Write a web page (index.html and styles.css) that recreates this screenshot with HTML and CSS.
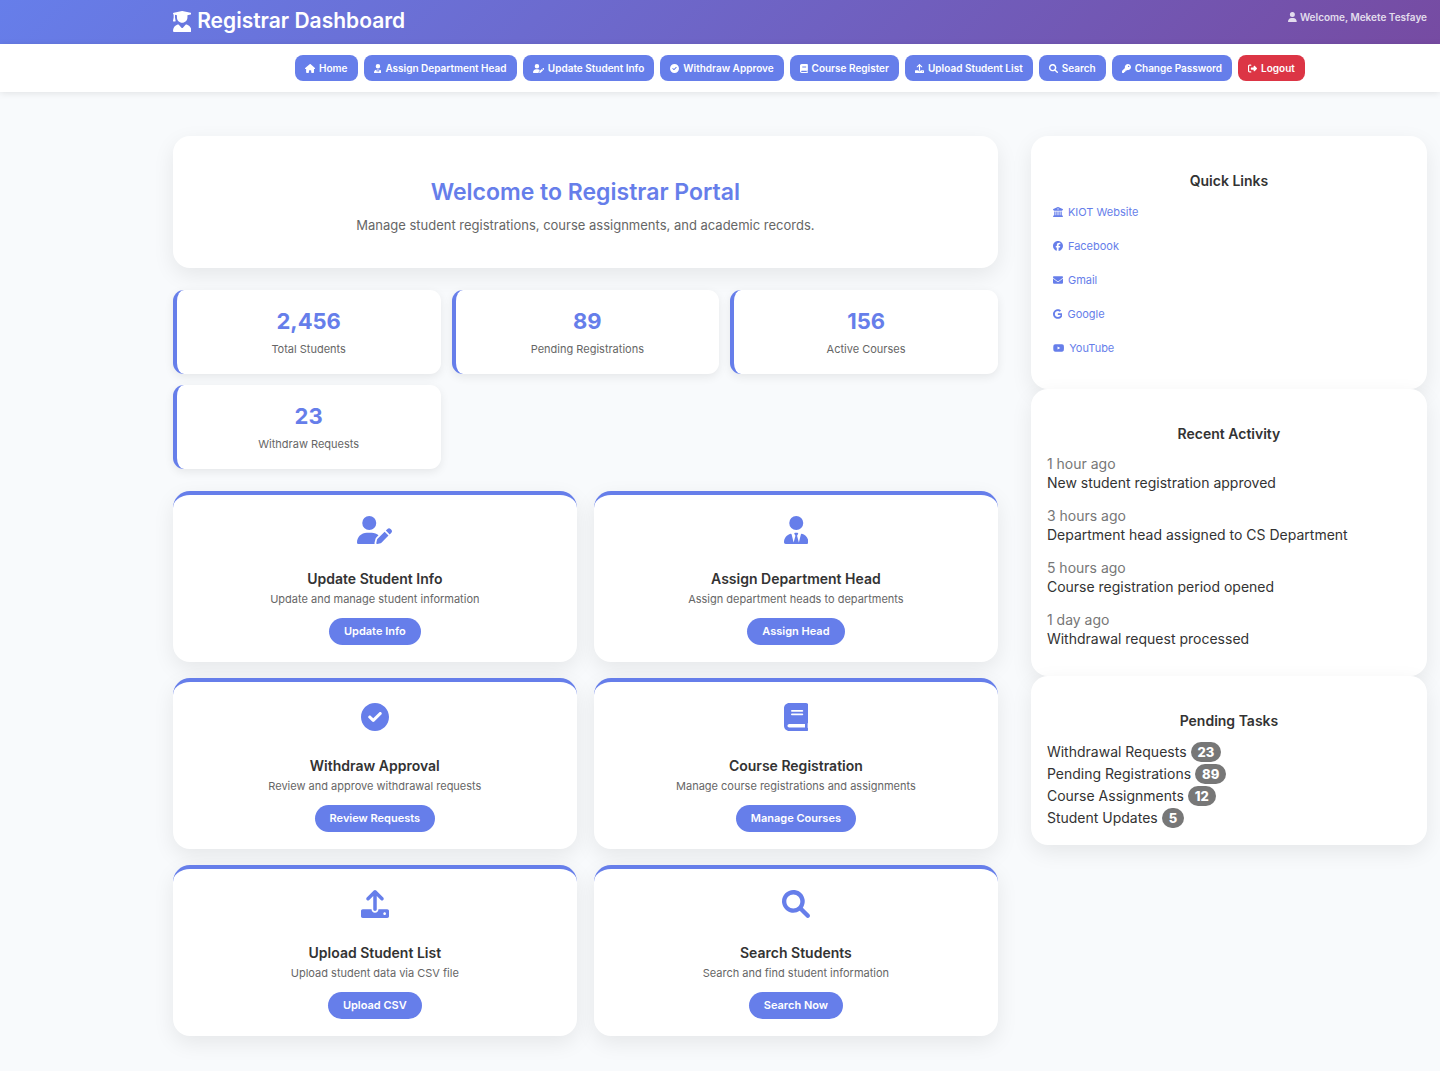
FILE: index.html
```html
<!DOCTYPE html>
<html lang="en">
<head>
<meta charset="utf-8">
<meta name="viewport" content="width=device-width, initial-scale=1">
<title>Registrar Dashboard</title>
<link rel="stylesheet" href="styles.css">
</head>
<body>
<svg class="sprite" aria-hidden="true">
<defs>
<path id="i-user" d="M224 256A128 128 0 1 0 224 0a128 128 0 1 0 0 256zm-45.7 48C79.8 304 0 383.8 0 482.3C0 498.7 13.3 512 29.7 512H418.3c16.4 0 29.7-13.3 29.7-29.7C448 383.8 368.2 304 269.7 304H178.3z"/>
<path id="i-graduate" d="M219.3 .5c3.1-.6 6.3-.6 9.4 0l200 40C439.9 42.7 448 52.6 448 64s-8.1 21.3-19.3 23.5L352 102.9V160c0 70.7-57.3 128-128 128s-128-57.3-128-128V102.9L48 93.3v65.1l15.7 78.4c.9 4.7-.3 9.6-3.3 13.3s-7.6 5.9-12.4 5.9H16c-4.8 0-9.3-2.1-12.4-5.9s-4.3-8.6-3.3-13.3L16 158.4V86.6C6.5 83.3 0 74.3 0 64C0 52.6 8.1 42.7 19.3 40.5l200-40zM111.9 327.7c10.5-3.4 21.8 .4 29.4 8.5l71 75.5c6.3 6.7 17 6.7 23.3 0l71-75.5c7.6-8.1 18.9-11.9 29.4-8.5C401 348.6 448 409.4 448 481.3c0 17-13.8 30.7-30.7 30.7H30.7C13.8 512 0 498.2 0 481.3c0-71.9 47-132.7 111.9-153.6z"/>
<path id="i-user-pen" d="M224 256A128 128 0 1 0 224 0a128 128 0 1 0 0 256zm-45.7 48C79.8 304 0 383.8 0 482.3C0 498.7 13.3 512 29.7 512H322.8c-3.1-8.8-3.7-18.4-1.4-27.8l15-60.1c2.8-11.3 8.6-21.5 16.8-29.7l40.3-40.3c-32.1-31-75.7-50.1-123.9-50.1H178.3zm435.5-68.3c-15.6-15.6-40.9-15.6-56.6 0l-29.4 29.4 71 71 29.4-29.4c15.6-15.6 15.6-40.9 0-56.6l-14.4-14.4zM375.9 417c-4.1 4.1-7 9.2-8.4 14.9l-15 60.1c-1.4 5.5 .2 11.2 4.2 15.2s9.7 5.6 15.2 4.2l60.1-15c5.6-1.4 10.8-4.3 14.9-8.4L576.1 358.7l-71-71L375.9 417z"/>
<path id="i-user-tie" d="M224 256A128 128 0 1 1 224 0a128 128 0 1 1 0 256zM209.1 359.2l-18.6-31c-6.4-10.7 1.3-24.2 13.7-24.2H224h19.7c12.4 0 20.1 13.6 13.7 24.2l-18.6 31 33.4 123.9 36-146.9c2-8.1 9.8-13.4 17.9-11.3c70.1 17.6 121.9 81 121.9 156.4c0 17-13.8 30.7-30.7 30.7H285.5c-2.1 0-4-.4-5.8-1.1l.3 1.1H168l.3-1.1c-1.8 .7-3.8 1.1-5.8 1.1H30.7C13.8 512 0 498.2 0 481.3c0-75.5 51.9-138.9 121.9-156.4c8.1-2 15.9 3.3 17.9 11.3l36 146.9 33.4-123.9z"/>
<path id="i-check" d="M0 256C0 114.6 114.6 0 256 0C397.4 0 512 114.6 512 256C512 397.4 397.4 512 256 512C114.6 512 0 397.4 0 256zM371.8 211.8C382.7 200.9 382.7 183.1 371.8 172.2C360.9 161.3 343.1 161.3 332.2 172.2L224 280.4L179.8 236.2C168.9 225.3 151.1 225.3 140.2 236.2C129.3 247.1 129.3 264.9 140.2 275.8L204.2 339.8C215.1 350.7 232.9 350.7 243.8 339.8L371.8 211.8z"/>
<path id="i-book" d="M448 336v-288C448 21.49 426.5 0 400 0H96C42.98 0 0 42.98 0 96v320c0 53.02 42.98 96 96 96h320c17.67 0 32-14.33 32-31.1c0-11.72-6.607-21.52-16-27.1v-81.36C441.8 362.8 448 350.2 448 336zM143.1 128h192C344.8 128 352 135.2 352 144C352 152.8 344.8 160 336 160H143.1C135.2 160 128 152.8 128 144C128 135.2 135.2 128 143.1 128zM143.1 192h192C344.8 192 352 199.2 352 208C352 216.8 344.8 224 336 224H143.1C135.2 224 128 216.8 128 208C128 199.2 135.2 192 143.1 192zM384 448H96c-17.67 0-32-14.33-32-32c0-17.67 14.33-32 32-32h288V448z"/>
<path id="i-upload" d="M105.4 182.6c12.5 12.49 32.76 12.5 45.25 .001L224 109.3V352c0 17.67 14.33 32 32 32c17.67 0 32-14.33 32-32V109.3l73.38 73.38c12.49 12.49 32.75 12.49 45.25-.001c12.49-12.49 12.49-32.75 0-45.25l-128-128C272.4 3.125 264.2 0 256 0S239.6 3.125 233.4 9.375L105.4 137.4C92.88 149.9 92.88 170.1 105.4 182.6zM480 352h-160c0 35.35-28.65 64-64 64s-64-28.65-64-64H32c-17.67 0-32 14.33-32 32v96c0 17.67 14.33 32 32 32h448c17.67 0 32-14.33 32-32v-96C512 366.3 497.7 352 480 352zM432 456c-13.2 0-24-10.8-24-24c0-13.2 10.8-24 24-24s24 10.8 24 24C456 445.2 445.2 456 432 456z"/>
<path id="i-search" d="M500.3 443.7l-119.7-119.7c27.22-40.41 40.65-90.9 33.46-144.7C401.8 87.79 326.8 13.32 235.2 1.723C99.01-15.51-15.51 99.01 1.724 235.2c11.6 91.64 86.08 166.7 177.6 178.9c53.8 7.189 104.3-6.236 144.7-33.46l119.7 119.7c15.62 15.62 40.95 15.62 56.57 0C515.9 484.7 515.9 459.3 500.3 443.7zM79.1 208c0-70.58 57.42-128 128-128s128 57.42 128 128c0 70.58-57.42 128-128 128S79.1 278.6 79.1 208z"/>
<path id="i-home" d="M575.8 255.5c0 18-15 32.1-32 32.1h-32l.7 160.2c0 2.7-.2 5.4-.5 8.1V472c0 22.1-17.9 40-40 40H456c-1.1 0-2.2 0-3.3-.1c-1.4 .1-2.8 .1-4.2 .1H416 392c-22.1 0-40-17.9-40-40V448 384c0-17.7-14.3-32-32-32H256c-17.7 0-32 14.3-32 32v64 24c0 22.1-17.9 40-40 40H160 128.1c-1.5 0-3-.1-4.5-.2c-1.2 .1-2.4 .2-3.6 .2H104c-22.1 0-40-17.9-40-40V360c0-.9 0-1.9 .1-2.8V287.6H32c-18 0-32-14-32-32.1c0-9 3-17 10-24L266.4 8c7-7 15-8 22-8s15 2 21 7L564.8 231.5c8 7 12 15 11 24z"/>
<path id="i-key" d="M336 352c97.2 0 176-78.8 176-176S433.2 0 336 0S160 78.8 160 176c0 18.7 2.9 36.8 8.3 53.7L7 391c-4.5 4.5-7 10.6-7 17v80c0 13.3 10.7 24 24 24h80c13.3 0 24-10.7 24-24V448h40c13.3 0 24-10.7 24-24V384h40c6.4 0 12.5-2.5 17-7l33.3-33.3c16.9 5.4 35 8.3 53.7 8.3zM376 96a40 40 0 1 1 0 80 40 40 0 1 1 0-80z"/>
<path id="i-logout" d="M377.9 105.9L500.7 228.7c7.2 7.2 11.3 17.1 11.3 27.3s-4.1 20.1-11.3 27.3L377.9 406.1c-6.4 6.4-15 9.9-24 9.9c-18.7 0-33.9-15.2-33.9-33.9l0-62.1-128 0c-17.7 0-32-14.3-32-32l0-64c0-17.7 14.3-32 32-32l128 0 0-62.1c0-18.7 15.2-33.9 33.9-33.9c9 0 17.6 3.6 24 9.9zM160 96L96 96c-17.7 0-32 14.3-32 32l0 256c0 17.7 14.3 32 32 32l64 0c17.7 0 32 14.3 32 32s-14.3 32-32 32l-64 0c-53 0-96-43-96-96L0 128C0 75 43 32 96 32l64 0c17.7 0 32 14.3 32 32s-14.3 32-32 32z"/>
<path id="i-university" d="M243.4 2.6l-224 96c-14 6-21.8 21-18.7 35.8S16.8 160 32 160v8c0 13.3 10.7 24 24 24H456c13.3 0 24-10.7 24-24v-8c15.2 0 28.3-10.7 31.3-25.6s-4.8-29.9-18.7-35.8l-224-96c-8-3.4-17.2-3.4-25.2 0zM128 224H64V420.3c-.6 .3-1.2 .7-1.8 1.1l-48 32c-11.7 7.8-17 22.4-12.9 35.9S17.9 512 32 512H480c14.1 0 26.5-9.2 30.6-22.7s-1.1-28.1-12.9-35.9l-48-32c-.6-.4-1.2-.7-1.8-1.1V224H384V416H344V224H280V416H232V224H168V416H128V224zM256 64a32 32 0 1 1 0 64 32 32 0 1 1 0-64z"/>
<path id="i-facebook" d="M512 256C512 114.6 397.4 0 256 0S0 114.6 0 256C0 376 82.7 476.8 194.2 504.5V334.2H141.4V256h52.8V222.3c0-87.1 39.4-127.5 125-127.5c16.2 0 44.2 3.2 55.7 6.4V172c-6-.6-16.5-1-29.6-1c-42 0-58.2 15.9-58.2 57.2V256h83.6l-14.4 78.2H287V510.1C413.8 494.8 512 386.9 512 256z"/>
<path id="i-envelope" d="M48 64C21.5 64 0 85.5 0 112c0 15.1 7.1 29.3 19.2 38.4L236.8 313.6c11.4 8.5 27 8.5 38.4 0L492.8 150.4c12.1-9.1 19.2-23.3 19.2-38.4c0-26.5-21.5-48-48-48H48zM0 176V384c0 35.3 28.7 64 64 64H448c35.3 0 64-28.7 64-64V176L294.4 339.2c-22.8 17.1-54 17.1-76.8 0L0 176z"/>
<path id="i-google" d="M488 261.8C488 403.3 391.1 504 248 504 110.8 504 0 393.2 0 256S110.8 8 248 8c66.8 0 123 24.5 166.3 64.9l-67.5 64.9C258.5 52.6 94.3 116.6 94.3 256c0 86.5 69.1 156.6 153.7 156.6 98.2 0 135-70.4 140.8-106.9H248v-85.3h236.1c2.3 12.7 3.9 24.9 3.9 41.4z"/>
<path id="i-youtube" d="M549.7 124.1c-6.3-23.7-24.8-42.3-48.3-48.6C458.8 64 288 64 288 64S117.2 64 74.6 75.5c-23.5 6.3-42 24.9-48.3 48.6-11.4 42.9-11.4 132.3-11.4 132.3s0 89.4 11.4 132.3c6.3 23.7 24.8 41.5 48.3 47.8C117.2 448 288 448 288 448s170.8 0 213.4-11.5c23.5-6.3 42-24.2 48.3-47.8 11.4-42.9 11.4-132.3 11.4-132.3s0-89.4-11.4-132.3zM232.2 337.6V175.2l142.7 81.2-142.7 81.2z"/>
</defs>
</svg>

<header class="header">
  <h1 class="brand"><svg class="icon" viewBox="0 0 448 512"><use href="#i-graduate"/></svg>Registrar Dashboard</h1>
  <div class="user"><svg class="icon" viewBox="0 0 448 512"><use href="#i-user"/></svg>Welcome, Mekete Tesfaye</div>
</header>

<nav class="nav">
  <a class="nav-link" href="#"><svg class="icon" viewBox="0 0 576 512"><use href="#i-home"/></svg>Home</a>
  <a class="nav-link" href="#"><svg class="icon" viewBox="0 0 448 512"><use href="#i-user-tie"/></svg>Assign Department Head</a>
  <a class="nav-link" href="#"><svg class="icon" viewBox="0 0 640 512"><use href="#i-user-pen"/></svg>Update Student Info</a>
  <a class="nav-link" href="#"><svg class="icon" viewBox="0 0 512 512"><use href="#i-check"/></svg>Withdraw Approve</a>
  <a class="nav-link" href="#"><svg class="icon" viewBox="0 0 448 512"><use href="#i-book"/></svg>Course Register</a>
  <a class="nav-link" href="#"><svg class="icon" viewBox="0 0 512 512"><use href="#i-upload"/></svg>Upload Student List</a>
  <a class="nav-link" href="#"><svg class="icon" viewBox="0 0 512 512"><use href="#i-search"/></svg>Search</a>
  <a class="nav-link" href="#"><svg class="icon" viewBox="0 0 512 512"><use href="#i-key"/></svg>Change Password</a>
  <a class="nav-link nav-link-logout" href="#"><svg class="icon" viewBox="0 0 512 512"><use href="#i-logout"/></svg>Logout</a>
</nav>

<div class="layout">
  <main class="main">
    <section class="card welcome">
      <h2 class="welcome-title">Welcome to Registrar Portal</h2>
      <p class="welcome-text">Manage student registrations, course assignments, and academic records.</p>
    </section>

    <section class="stats">
      <div class="stat"><div class="stat-value">2,456</div><div class="stat-label">Total Students</div></div>
      <div class="stat"><div class="stat-value">89</div><div class="stat-label">Pending Registrations</div></div>
      <div class="stat"><div class="stat-value">156</div><div class="stat-label">Active Courses</div></div>
      <div class="stat"><div class="stat-value">23</div><div class="stat-label">Withdraw Requests</div></div>
    </section>

    <section class="features">
      <article class="card feature">
        <svg class="icon feature-icon" viewBox="0 0 640 512"><use href="#i-user-pen"/></svg>
        <h3 class="card-title">Update Student Info</h3>
        <p class="feature-text">Update and manage student information</p>
        <a class="button" href="#">Update Info</a>
      </article>
      <article class="card feature">
        <svg class="icon feature-icon" viewBox="0 0 448 512"><use href="#i-user-tie"/></svg>
        <h3 class="card-title">Assign Department Head</h3>
        <p class="feature-text">Assign department heads to departments</p>
        <a class="button" href="#">Assign Head</a>
      </article>
      <article class="card feature">
        <svg class="icon feature-icon" viewBox="0 0 512 512"><use href="#i-check"/></svg>
        <h3 class="card-title">Withdraw Approval</h3>
        <p class="feature-text">Review and approve withdrawal requests</p>
        <a class="button" href="#">Review Requests</a>
      </article>
      <article class="card feature">
        <svg class="icon feature-icon" viewBox="0 0 448 512"><use href="#i-book"/></svg>
        <h3 class="card-title">Course Registration</h3>
        <p class="feature-text">Manage course registrations and assignments</p>
        <a class="button" href="#">Manage Courses</a>
      </article>
      <article class="card feature">
        <svg class="icon feature-icon" viewBox="0 0 512 512"><use href="#i-upload"/></svg>
        <h3 class="card-title">Upload Student List</h3>
        <p class="feature-text">Upload student data via CSV file</p>
        <a class="button" href="#">Upload CSV</a>
      </article>
      <article class="card feature">
        <svg class="icon feature-icon" viewBox="0 0 512 512"><use href="#i-search"/></svg>
        <h3 class="card-title">Search Students</h3>
        <p class="feature-text">Search and find student information</p>
        <a class="button" href="#">Search Now</a>
      </article>
    </section>
  </main>

  <aside class="sidebar">
    <section class="card panel">
      <h3 class="card-title">Quick Links</h3>
      <ul class="links">
        <li><a class="quick-link" href="#"><svg class="icon" viewBox="0 0 512 512"><use href="#i-university"/></svg>KIOT Website</a></li>
        <li><a class="quick-link" href="#"><svg class="icon" viewBox="0 0 512 512"><use href="#i-facebook"/></svg>Facebook</a></li>
        <li><a class="quick-link" href="#"><svg class="icon" viewBox="0 0 512 512"><use href="#i-envelope"/></svg>Gmail</a></li>
        <li><a class="quick-link" href="#"><svg class="icon" viewBox="0 0 488 512"><use href="#i-google"/></svg>Google</a></li>
        <li><a class="quick-link" href="#"><svg class="icon" viewBox="0 0 576 512"><use href="#i-youtube"/></svg>YouTube</a></li>
      </ul>
    </section>
    <section class="card panel">
      <h3 class="card-title">Recent Activity</h3>
      <ul class="activity">
        <li><span class="time">1 hour ago</span><span>New student registration approved</span></li>
        <li><span class="time">3 hours ago</span><span>Department head assigned to CS Department</span></li>
        <li><span class="time">5 hours ago</span><span>Course registration period opened</span></li>
        <li><span class="time">1 day ago</span><span>Withdrawal request processed</span></li>
      </ul>
    </section>
    <section class="card panel">
      <h3 class="card-title">Pending Tasks</h3>
      <ul class="tasks">
        <li>Withdrawal Requests <span class="badge">23</span></li>
        <li>Pending Registrations <span class="badge">89</span></li>
        <li>Course Assignments <span class="badge">12</span></li>
        <li>Student Updates <span class="badge">5</span></li>
      </ul>
    </section>
  </aside>
</div>
</body>
</html>
```
FILE: styles.css
```css
*, *::before, *::after { box-sizing: border-box; }

:root {
  --primary: #667eea;
  --edge-left: 12vw;
  --edge-right: 13px;
}

body {
  margin: 0;
  background: #f8fafc;
  color: #333;
  font-family: Inter, "Open Sans", sans-serif;
  font-size: 14px;
}

h1, h2, h3, p, ul { margin: 0; padding: 0; }
ul { list-style: none; }
a { text-decoration: none; }

.sprite { position: absolute; width: 0; height: 0; }

.icon {
  height: 1em;
  flex: none;
  fill: currentColor;
}

.header {
  display: flex;
  justify-content: space-between;
  align-items: flex-start;
  min-height: 44px;
  padding: 6px var(--edge-right) 6px var(--edge-left);
  background: linear-gradient(135deg, #667eea 0%, #764ba2 100%);
  color: #fff;
}

.brand {
  display: flex;
  align-items: center;
  gap: 6px;
  font-size: 21px;
  font-weight: 600;
  line-height: 30px;
}

.user {
  display: flex;
  align-items: center;
  gap: 3px;
  font-size: 10px;
  font-weight: 600;
  line-height: 22px;
  opacity: .8;
}

.nav {
  display: flex;
  flex-wrap: wrap;
  justify-content: center;
  gap: 6px;
  padding: 11px var(--edge-right) 11px var(--edge-left);
  background: #fff;
  box-shadow: 0 1px 7px rgba(0, 0, 0, .1);
}

.nav-link {
  display: flex;
  align-items: center;
  gap: 4px;
  padding: 0 10px;
  border-radius: 8px;
  background: var(--primary);
  color: #fff;
  font-size: 10px;
  font-weight: 600;
  line-height: 26px;
}

.nav-link-logout { background: #dc3545; }
.nav-link .icon { height: 9px; }

.layout {
  display: grid;
  grid-template-columns: 25fr 12fr;
  align-items: start;
  gap: 33px;
  padding: 44px var(--edge-right) 35px var(--edge-left);
}

.main { display: grid; gap: 22px; }

.card {
  border-radius: 17px;
  background: #fff;
  box-shadow: 0 7px 21px rgba(0, 0, 0, .08);
}

.card-title {
  font-size: 14px;
  font-weight: 600;
  line-height: 20px;
  text-align: center;
}

.welcome {
  padding: 39px 33px 33px;
  text-align: center;
}

.welcome-title {
  margin-bottom: 6px;
  color: var(--primary);
  font-size: 23px;
  font-weight: 600;
  line-height: 34px;
}

.welcome-text {
  color: #666;
  font-size: 13px;
  line-height: 20px;
}

.stats {
  display: grid;
  grid-template-columns: repeat(3, 1fr);
  gap: 11px;
}

.stat {
  padding: 14px 12px 16px;
  border-left: 4px solid var(--primary);
  border-radius: 11px;
  background: #fff;
  box-shadow: 0 3px 10px rgba(0, 0, 0, .08);
  text-align: center;
}

.stat-value {
  margin-bottom: 2px;
  color: var(--primary);
  font-size: 22px;
  font-weight: 700;
  line-height: 34px;
}

.stat-label {
  color: #666;
  font-size: 11px;
  line-height: 18px;
}

.features {
  display: grid;
  grid-template-columns: 1fr 1fr;
  gap: 16px 17px;
}

.feature {
  display: flex;
  flex-direction: column;
  align-items: center;
  padding: 21px 16px 17px;
  border-top: 4px solid var(--primary);
}

.feature-icon {
  height: 28px;
  margin-bottom: 25px;
  color: var(--primary);
}

.feature-text {
  margin-bottom: 9px;
  color: #666;
  font-size: 11px;
  line-height: 20px;
}

.button {
  padding: 0 15px;
  border-radius: 14px;
  background: var(--primary);
  color: #fff;
  font-size: 11px;
  font-weight: 600;
  line-height: 27px;
}

.panel { padding: 35px 16px 16px; }

.links {
  display: grid;
  padding: 4px 0 8px 6px;
}

.quick-link {
  display: flex;
  align-items: center;
  gap: 5px;
  color: var(--primary);
  font-size: 11px;
  line-height: 34px;
}

.quick-link .icon { height: 10px; }

.activity {
  display: grid;
  gap: 14px;
  padding: 10px 0 12px;
}

.activity li {
  display: grid;
  line-height: 19px;
}

.time { color: #777; }

.tasks {
  padding-top: 10px;
  line-height: 22px;
}

.tasks li {
  display: flex;
  align-items: center;
  gap: 4px;
}

.badge {
  padding: 0 7px;
  border-radius: 10px;
  background: #777;
  color: #fff;
  font-weight: 800;
  font-size: 13px;
  line-height: 20px;
}
```
